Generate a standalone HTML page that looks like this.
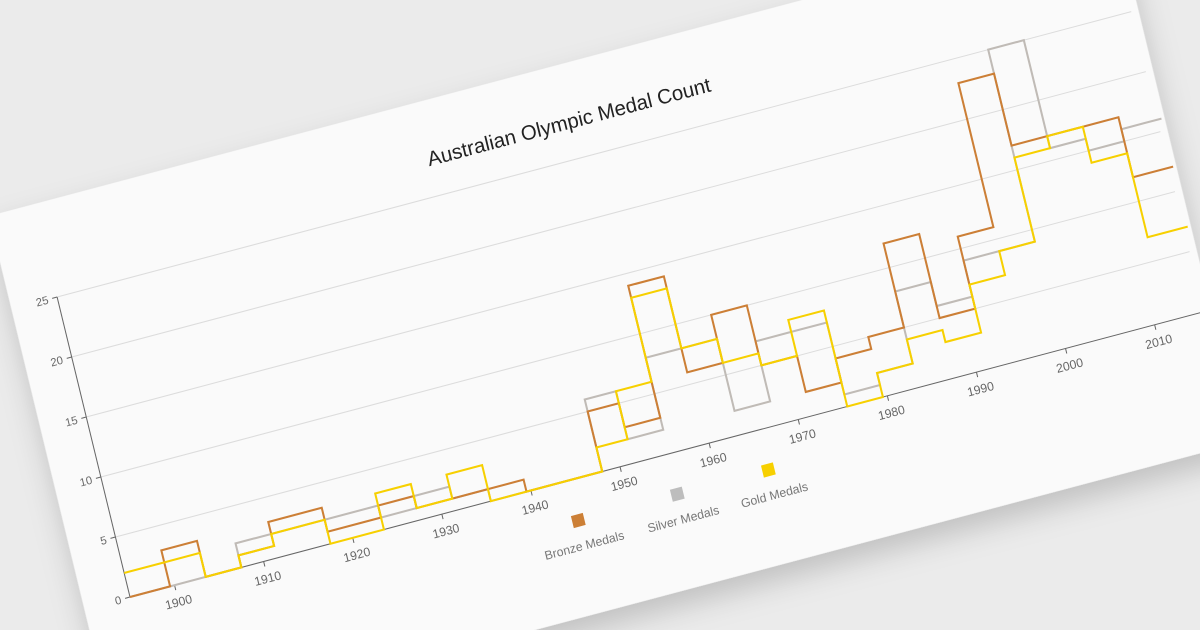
<!DOCTYPE html>
<html><head><meta charset="utf-8"><style>
html,body{margin:0;padding:0;background:#ebebeb;width:1200px;height:630px;overflow:hidden}
svg{display:block}
text{font-family:"Liberation Sans",sans-serif}
</style></head><body>
<svg width="1200" height="630" viewBox="0 0 1200 630" xmlns="http://www.w3.org/2000/svg">
<defs>
<filter id="sh" x="-20%" y="-20%" width="140%" height="160%">
<feDropShadow dx="0" dy="14" stdDeviation="14" flood-color="#000" flood-opacity="0.18"/>
</filter>
</defs>
<rect width="1200" height="630" fill="#ebebeb"/>
<g transform="matrix(0.99,-0.263,0.243,1.0,130,597)">
<rect x="-46" y="-393" width="1138" height="525" fill="#fafafa" filter="url(#sh)"/>
<g stroke="#dcdcdc" stroke-width="1">
<line x1="0" y1="-60" x2="1085" y2="-60"/>
<line x1="0" y1="-120" x2="1085" y2="-120"/>
<line x1="0" y1="-180" x2="1085" y2="-180"/>
<line x1="0" y1="-240" x2="1085" y2="-240"/>
<line x1="0" y1="-300" x2="1085" y2="-300"/>
</g>
<g stroke="#666" stroke-width="1" fill="none">
<line x1="0" y1="0" x2="1100" y2="0"/>
<line x1="0" y1="0" x2="0" y2="-300"/>
<path d="M-5,0H0M-5,-60H0M-5,-120H0M-5,-180H0M-5,-240H0M-5,-300H0"/>
<path d="M45,0V5M135,0V5M225,0V5M315,0V5M405,0V5M495,0V5M585,0V5M675,0V5M765,0V5M855,0V5M945,0V5M1035,0V5"/>
</g>
<g font-size="11" fill="#666" text-anchor="end">
<text x="-9" y="4">0</text><text x="-9" y="-56">5</text><text x="-9" y="-116">10</text>
<text x="-9" y="-176">15</text><text x="-9" y="-236">20</text><text x="-9" y="-296">25</text>
</g>
<g font-size="12" fill="#666" text-anchor="middle">
<text x="45" y="21">1900</text><text x="135" y="21">1910</text><text x="225" y="21">1920</text>
<text x="315" y="21">1930</text><text x="405" y="21">1940</text><text x="495" y="21">1950</text>
<text x="585" y="21">1960</text><text x="675" y="21">1970</text><text x="765" y="21">1980</text>
<text x="855" y="21">1990</text><text x="945" y="21">2000</text><text x="1035" y="21">2010</text>
</g>
<g fill="none" stroke-width="2" stroke-linejoin="miter">
<path stroke="#c0bbb6" d="M0,0 H40.5 V0 H76.5 V0 H112.5 V-24 H148.5 V-24 H202.5 V-24 H256.5 V-12 H292.5 V-24 H328.5 V-12 H364.5 V0 H477 V-72 H508.5 V-24 H544.5 V-96 H580.5 V-96 H616.5 V-24 H652.5 V-84 H688.5 V-84 H724.5 V-12 H760.5 V-24 H796.5 V-96 H832.5 V-72 H868.5 V-108 H904.5 V-108 H940.5 V-300 H976.5 V-192 H1012.5 V-180 H1048.5 V-192 H1089"/>
<path stroke="#cc7f36" d="M0,0 H40.5 V-36 H76.5 V0 H112.5 V-12 H148.5 V-36 H202.5 V-12 H256.5 V-24 H292.5 V-12 H328.5 V-12 H364.5 V-12 H400.5 V0 H477 V-60 H508.5 V-36 H544.5 V-168 H580.5 V-72 H616.5 V-120 H652.5 V-60 H688.5 V-24 H724.5 V-48 H760.5 V-60 H796.5 V-144 H832.5 V-60 H868.5 V-132 H904.5 V-276 H940.5 V-204 H976.5 V-204 H1012.5 V-204 H1048.5 V-144 H1089"/>
<path stroke="#f7d000" d="M0,-24 H40.5 V-24 H76.5 V0 H112.5 V-12 H148.5 V-24 H202.5 V0 H256.5 V-36 H292.5 V-12 H328.5 V-36 H364.5 V0 H477 V-24 H508.5 V-72 H544.5 V-156 H580.5 V-96 H616.5 V-72 H652.5 V-60 H688.5 V-96 H724.5 V0 H760.5 V-24 H796.5 V-48 H832.5 V-36 H868.5 V-84 H904.5 V-108 H940.5 V-192 H976.5 V-204 H1012.5 V-168 H1048.5 V-84 H1089"/>
</g>
<text x="526" y="-330" font-size="20" fill="#222" text-anchor="middle" font-weight="500">Australian Olympic Medal Count</text>
<rect x="437" y="34" width="12" height="12" fill="#cc7f36"/>
<rect x="537" y="34" width="12" height="12" fill="#bdbdbd"/>
<rect x="629" y="34" width="12" height="12" fill="#f7d000"/>
<g font-size="12" fill="#777" text-anchor="middle">
<text x="443" y="69">Bronze Medals</text>
<text x="543" y="69">Silver Medals</text>
<text x="635" y="69">Gold Medals</text>
</g>
</g>
</svg>
</body></html>
